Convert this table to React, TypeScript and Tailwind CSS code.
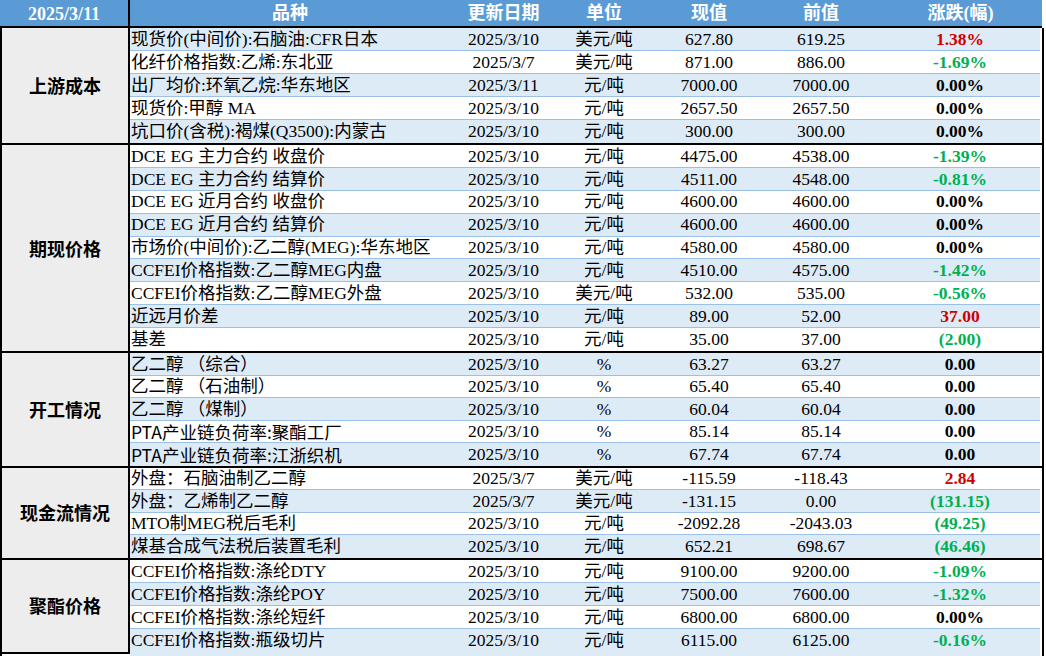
import React from 'react'

type Row = [string, string, string, string, string, string, ('r' | 'g' | '')?, boolean?]

const SECTIONS: { name: string; h: string; rows: Row[] }[] = [
  {
    name: '上游成本',
    h: 'h-[23px]',
    rows: [
      ['现货价(中间价):石脑油:CFR日本', '2025/3/10', '美元/吨', '627.80', '619.25', '1.38%', 'r'],
      ['化纤价格指数:乙烯:东北亚', '2025/3/7', '美元/吨', '871.00', '886.00', '-1.69%', 'g'],
      ['出厂均价:环氧乙烷:华东地区', '2025/3/11', '元/吨', '7000.00', '7000.00', '0.00%'],
      ['现货价:甲醇 MA', '2025/3/10', '元/吨', '2657.50', '2657.50', '0.00%'],
      ['坑口价(含税):褐煤(Q3500):内蒙古', '2025/3/10', '元/吨', '300.00', '300.00', '0.00%'],
    ],
  },
  {
    name: '期现价格',
    h: 'h-[22.9px]',
    rows: [
      ['DCE EG 主力合约 收盘价', '2025/3/10', '元/吨', '4475.00', '4538.00', '-1.39%', 'g'],
      ['DCE EG 主力合约 结算价', '2025/3/10', '元/吨', '4511.00', '4548.00', '-0.81%', 'g'],
      ['DCE EG 近月合约 收盘价', '2025/3/10', '元/吨', '4600.00', '4600.00', '0.00%'],
      ['DCE EG 近月合约 结算价', '2025/3/10', '元/吨', '4600.00', '4600.00', '0.00%'],
      ['市场价(中间价):乙二醇(MEG):华东地区', '2025/3/10', '元/吨', '4580.00', '4580.00', '0.00%'],
      ['CCFEI价格指数:乙二醇MEG内盘', '2025/3/10', '元/吨', '4510.00', '4575.00', '-1.42%', 'g'],
      ['CCFEI价格指数:乙二醇MEG外盘', '2025/3/10', '美元/吨', '532.00', '535.00', '-0.56%', 'g'],
      ['近远月价差', '2025/3/10', '元/吨', '89.00', '52.00', '37.00', 'r'],
      ['基差', '2025/3/10', '元/吨', '35.00', '37.00', '(2.00)', 'g'],
    ],
  },
  {
    name: '开工情况',
    h: 'h-[22.6px]',
    rows: [
      ['乙二醇 （综合）', '2025/3/10', '%', '63.27', '63.27', '0.00'],
      ['乙二醇 （石油制）', '2025/3/10', '%', '65.40', '65.40', '0.00'],
      ['乙二醇 （煤制）', '2025/3/10', '%', '60.04', '60.04', '0.00'],
      ['PTA产业链负荷率:聚酯工厂', '2025/3/10', '%', '85.14', '85.14', '0.00', '', true],
      ['PTA产业链负荷率:江浙织机', '2025/3/10', '%', '67.74', '67.74', '0.00', '', true],
    ],
  },
  {
    name: '现金流情况',
    h: 'h-[22.5px]',
    rows: [
      ['外盘：石脑油制乙二醇', '2025/3/7', '美元/吨', '-115.59', '-118.43', '2.84', 'r'],
      ['外盘：乙烯制乙二醇', '2025/3/7', '美元/吨', '-131.15', '0.00', '(131.15)', 'g'],
      ['MTO制MEG税后毛利', '2025/3/10', '元/吨', '-2092.28', '-2043.03', '(49.25)', 'g'],
      ['煤基合成气法税后装置毛利', '2025/3/10', '元/吨', '652.21', '698.67', '(46.46)', 'g'],
    ],
  },
  {
    name: '聚酯价格',
    h: 'h-[23px]',
    rows: [
      ['CCFEI价格指数:涤纶DTY', '2025/3/10', '元/吨', '9100.00', '9200.00', '-1.09%', 'g'],
      ['CCFEI价格指数:涤纶POY', '2025/3/10', '元/吨', '7500.00', '7600.00', '-1.32%', 'g'],
      ['CCFEI价格指数:涤纶短纤', '2025/3/10', '元/吨', '6800.00', '6800.00', '0.00%'],
      ['CCFEI价格指数:瓶级切片', '2025/3/10', '元/吨', '6115.00', '6125.00', '-0.16%', 'g'],
    ],
  },
]

const serif = "font-['Liberation_Serif','Noto_Sans_CJK_SC',serif]"

export default function App() {
  let idx = 0
  return (
    <div className={`w-[1046px] h-[656px] overflow-hidden bg-white text-black ${serif}`}>
      {/* 表头 */}
      <div className="flex h-[28px] w-[1042px] bg-[#5B9BD5] border-b-2 border-black text-white font-bold text-[18px] leading-none">
        <div className="w-[130px] border-r-2 border-black flex items-center justify-center pt-[1px]">2025/3/11</div>
        <div className="w-[320px] flex items-center justify-center">品种</div>
        <div className="w-[107px] flex items-center justify-center">更新日期</div>
        <div className="w-[94px] flex items-center justify-center">单位</div>
        <div className="w-[116px] flex items-center justify-center">现值</div>
        <div className="w-[108px] flex items-center justify-center">前值</div>
        <div className="w-[165px] pl-[6px] flex items-center justify-center">涨跌(幅)</div>
      </div>

      {SECTIONS.map((sec, si) => {
        const isLast = si === SECTIONS.length - 1
        return (
          <div key={sec.name} className={`flex w-[1044px] border-x-2 border-black ${isLast ? '' : 'border-b-2'}`}>
            <div className={`w-[128px] shrink-0 bg-[#EDEDED] border-r-2 border-black flex items-center justify-center font-bold text-[18px] font-['Noto_Sans_CJK_SC',sans-serif] ${isLast ? 'h-[94px] self-start border-b-2' : ''}`}>
              {sec.name}
            </div>
            <div className="w-[910px] flex flex-col">
              {sec.rows.map((r, ri) => {
                const blue = idx++ % 2 === 0
                const last = ri === sec.rows.length - 1
                const [name, date, unit, cur, prev, chg, c, sans] = r
                return (
                  <div
                    key={name}
                    className={`flex ${sec.h} text-[17.5px] leading-none ${blue ? 'bg-[#DDEBF7]' : 'bg-white'} ${last ? '' : 'border-b border-[#9BC2E6]'}`}
                  >
                    <div className={`w-[320px] pl-[1px] pt-[1px] flex items-center whitespace-nowrap ${sans ? "font-['Noto_Sans_CJK_SC',sans-serif]" : ''}`}>{name}</div>
                    <div className="w-[107px] pt-[1px] flex items-center justify-center">{date}</div>
                    <div className="w-[94px] pt-[1px] flex items-center justify-center">{unit}</div>
                    <div className="w-[116px] pt-[1px] flex items-center justify-center">{cur}</div>
                    <div className="w-[108px] pt-[1px] flex items-center justify-center">{prev}</div>
                    <div className={`w-[165px] pl-[5px] pt-[1px] flex items-center justify-center font-bold ${c === 'r' ? 'text-[#D00000]' : c === 'g' ? 'text-[#00B050]' : 'text-black'}`}>
                      {chg}
                    </div>
                  </div>
                )
              })}
              {isLast && <div className="h-[8px] bg-[#DDEBF7]" />}
            </div>
          </div>
        )
      })}
    </div>
  )
}
